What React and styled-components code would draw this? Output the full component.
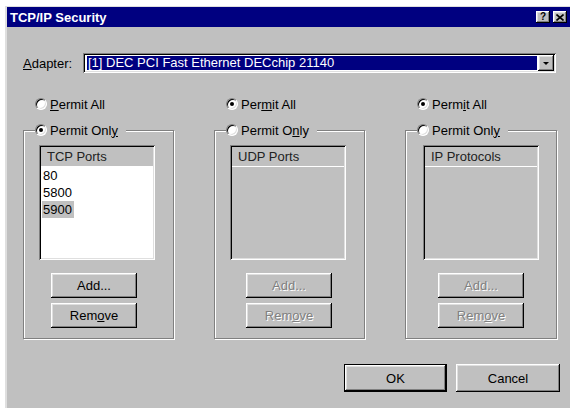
import React from 'react';
import styled, { createGlobalStyle, css } from 'styled-components';

const GlobalStyle = createGlobalStyle`
  html, body {
    margin: 0;
    padding: 0;
    background: #fff;
  }
  body {
    font-family: "Liberation Sans", Arial, sans-serif;
    font-size: 13px;
    color: #000;
  }
`;

// classic 3d bevels
const raised = css`
  box-shadow: inset -1px -1px #000, inset 1px 1px #fff,
    inset -2px -2px #808080, inset 2px 2px #dfdfdf;
`;

const sunken = css`
  box-shadow: inset 1px 1px #808080, inset -1px -1px #fff,
    inset 2px 2px #000, inset -2px -2px #dfdfdf;
`;

const Window = styled.div`
  margin: 6px 0 0 5px;
  width: 565px;
  height: 402px;
  box-sizing: border-box;
  background: #c0c0c0;
  border-left: 2px solid #dfdfdf;
  border-top: 1px solid #dfdfdf;
  display: flex;
  flex-direction: column;
`;

const TitleBar = styled.div`
  display: flex;
  align-items: center;
  height: 20px;
  padding: 0 3px 0 3px;
  background: #000080;
  color: #fff;
  font-weight: bold;
  font-size: 13px;
`;

const Title = styled.div`
  flex: 1;
`;

const CaptionButton = styled.div`
  width: 14px;
  height: 12px;
  margin-left: ${p => p.$gap || 0}px;
  background: #c0c0c0;
  ${raised};
  display: flex;
  align-items: center;
  justify-content: center;
  color: #000;
  font-size: 10px;
  font-weight: bold;
  line-height: 1;
`;

const Body = styled.div`
  padding: 26px 14px 0 16px;
`;

const AdapterRow = styled.div`
  display: flex;
  align-items: center;
  height: 20px;
`;

const Label = styled.div`
  width: 60px;
`;

const Combo = styled.div`
  width: 473px;
  height: 20px;
  box-sizing: border-box;
  padding: 2px;
  background: #fff;
  ${sunken};
  display: flex;
`;

const ComboValue = styled.div`
  flex: 1;
  margin: 1px 1px 1px 2px;
  padding-left: 1px;
  background: #000080;
  color: #fff;
  line-height: 14px;
  white-space: nowrap;
`;

const DropButton = styled.div`
  width: 16px;
  height: 16px;
  background: #c0c0c0;
  ${raised};
  display: flex;
  align-items: center;
  justify-content: center;

  &::after {
    content: '';
    border-left: 3px solid transparent;
    border-right: 3px solid transparent;
    border-top: 3px solid #000;
  }
`;

const Columns = styled.div`
  display: grid;
  grid-template-columns: 151px 151px 152px;
  column-gap: 40px;
  margin-top: 23px;
`;

const Column = styled.div`
  display: flex;
  flex-direction: column;
`;

const RadioRow = styled.label`
  display: flex;
  align-items: center;
  gap: 3px;
  height: 16px;
  padding-left: 12px;
  margin-bottom: 10px;
`;

const RadioDot = styled.span`
  width: 12px;
  height: 12px;
  box-sizing: border-box;
  border-radius: 50%;
  background: #fff;
  border: 1px solid;
  border-color: #808080 #fff #fff #808080;
  box-shadow: inset 1px 1px #000, inset -1px -1px #dfdfdf;
  display: flex;
  align-items: center;
  justify-content: center;
  flex: none;

  &::after {
    content: '';
    width: 4px;
    height: 4px;
    border-radius: 50%;
    background: #000;
    display: ${p => (p.$checked ? 'block' : 'none')};
  }
`;

const Group = styled.fieldset`
  margin: 0;
  padding: 7px 0 10px 0;
  border: 1px solid #808080;
  box-shadow: 1px 1px 0 #fff, inset 1px 1px 0 #fff;
  display: flex;
  flex-direction: column;
  align-items: flex-start;
  min-width: 0;
`;

const Legend = styled.legend`
  margin-left: 11px;
  padding: 0 8px 0 0;
  background: #c0c0c0;
  display: flex;
  align-items: center;
  gap: 3px;
  height: 16px;
`;

const ListBox = styled.div`
  width: 116px;
  height: 115px;
  margin-left: ${p => p.$inset}px;
  box-sizing: border-box;
  padding: 2px;
  background: ${p => (p.$enabled ? '#fff' : '#c0c0c0')};
  ${sunken};
  display: flex;
  flex-direction: column;
`;

const ListHeader = styled.div`
  height: 19px;
  line-height: 19px;
  padding-left: 6px;
  background: #c0c0c0;
  border-bottom: 1px solid #fff;
  color: #222;
  white-space: nowrap;
`;

const ListItem = styled.div`
  height: 17px;
  line-height: 17px;
  padding-left: 1px;
`;

const ItemText = styled.span`
  padding: 0 2px 0 1px;
  background: ${p => (p.$selected ? '#c0c0c0' : 'transparent')};
  display: inline-block;
`;

const Button = styled.button`
  width: ${p => p.$width || 86}px;
  height: ${p => p.$height || 25}px;
  margin-top: ${p => p.$top || 0}px;
  margin-left: ${p => p.$inset || 0}px;
  padding: 0;
  font: inherit;
  color: ${p => (p.disabled ? '#808080' : '#000')};
  text-shadow: ${p => (p.disabled ? '1px 1px 0 #fff' : 'none')};
  background: #c0c0c0;
  border: ${p => (p.$default ? '1px solid #000' : 'none')};
  ${raised};
`;

const Footer = styled.div`
  display: flex;
  justify-content: flex-end;
  gap: 9px;
  padding: 0 10px 0 0;
  margin-top: 25px;
`;

const Radio = ({ checked, children }) => (
  <>
    <RadioDot $checked={checked} />
    <span>{children}</span>
  </>
);

const panels = [
  {
    all: <><u>P</u>ermit All</>,
    only: <>Permit Onl<u>y</u></>,
    allChecked: false,
    header: 'TCP Ports',
    items: ['80', '5800', '5900'],
    selected: 2,
    enabled: true,
    listInset: 15,
    buttonInset: 27,
  },
  {
    all: <>Per<u>m</u>it All</>,
    only: <>Permit O<u>n</u>ly</>,
    allChecked: true,
    header: 'UDP Ports',
    items: [],
    enabled: false,
    listInset: 15,
    buttonInset: 31,
  },
  {
    all: <>Perm<u>i</u>t All</>,
    only: <>Permit Onl<u>y</u></>,
    allChecked: true,
    header: 'IP Protocols',
    items: [],
    enabled: false,
    listInset: 17,
    buttonInset: 32,
  },
];

function App() {
  return (
    <>
      <GlobalStyle />
      <Window>
        <TitleBar>
          <Title>TCP/IP Security</Title>
          <CaptionButton>?</CaptionButton>
          <CaptionButton $gap={3}>
            <svg width="8" height="7" viewBox="0 0 8 7">
              <path d="M0.5 0.5 L7.5 6.5 M7.5 0.5 L0.5 6.5" stroke="#000" strokeWidth="1.6" />
            </svg>
          </CaptionButton>
        </TitleBar>
        <Body>
          <AdapterRow>
            <Label><u>A</u>dapter:</Label>
            <Combo>
              <ComboValue>[1] DEC PCI Fast Ethernet DECchip 21140</ComboValue>
              <DropButton />
            </Combo>
          </AdapterRow>
          <Columns>
            {panels.map((p) => (
              <Column key={p.header}>
                <RadioRow>
                  <Radio checked={p.allChecked}>{p.all}</Radio>
                </RadioRow>
                <Group>
                  <Legend>
                    <Radio checked={!p.allChecked}>{p.only}</Radio>
                  </Legend>
                  <ListBox $enabled={p.enabled} $inset={p.listInset}>
                    <ListHeader>{p.header}</ListHeader>
                    {p.items.map((item, i) => (
                      <ListItem key={item}>
                        <ItemText $selected={i === p.selected}>{item}</ItemText>
                      </ListItem>
                    ))}
                  </ListBox>
                  <Button $top={13} $inset={p.buttonInset} disabled={!p.enabled}>Add...</Button>
                  <Button $top={5} $inset={p.buttonInset} disabled={!p.enabled}>Rem<u>o</u>ve</Button>
                </Group>
              </Column>
            ))}
          </Columns>
        </Body>
        <Footer>
          <Button $width={103} $height={28} $default>OK</Button>
          <Button $width={104} $height={28}>Cancel</Button>
        </Footer>
      </Window>
    </>
  );
}

export default App;
